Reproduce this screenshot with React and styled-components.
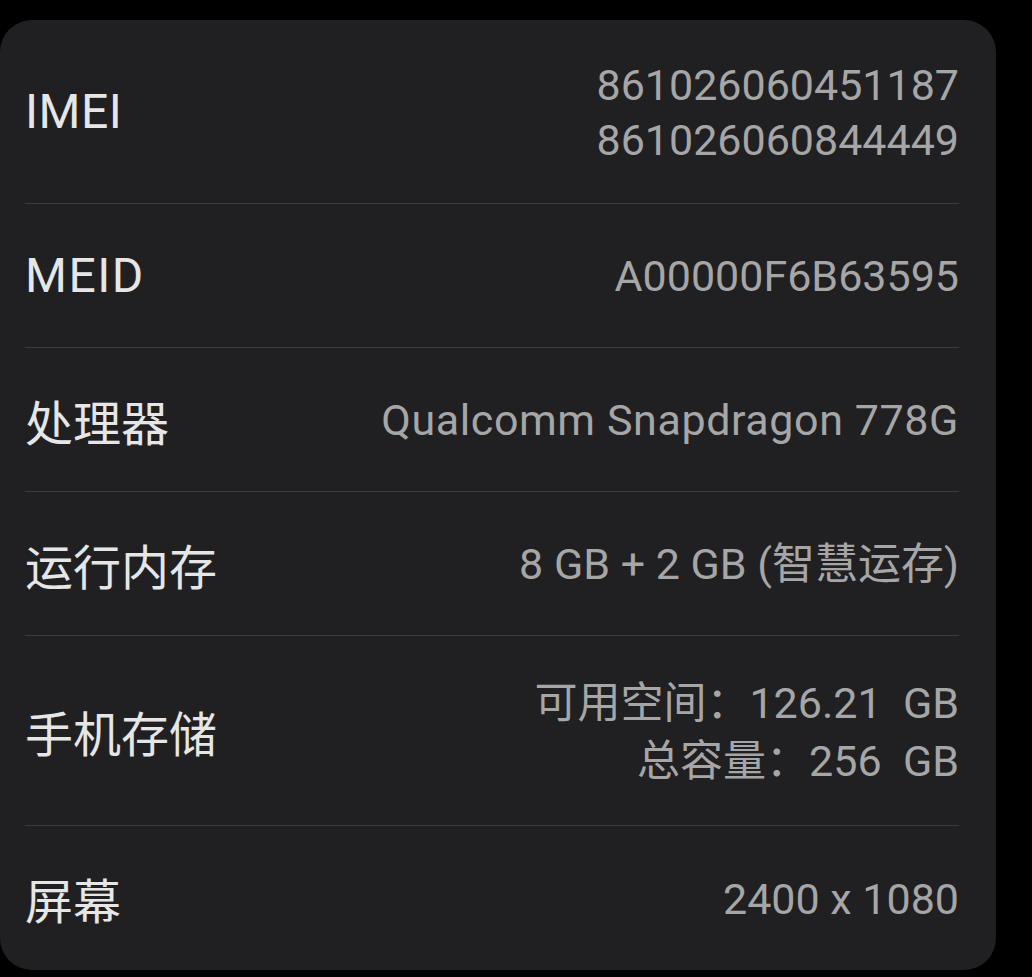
import React from "react";
import styled, { createGlobalStyle } from "styled-components";

const Global = createGlobalStyle`
  html, body {
    margin: 0;
    padding: 0;
    background: #000;
  }
  body {
    font-family: "Roboto", "Noto Sans CJK SC", sans-serif;
  }
`;

const Page = styled.div`
  width: 1032px;
  height: 977px;
  background: #000;
  padding-top: 20px;
  box-sizing: border-box;
`;

const Card = styled.div`
  width: 996px;
  height: 950px;
  box-sizing: border-box;
  background: #202022;
  border-radius: 32px;
  padding: 0 37px 0 25px;
  display: flex;
  flex-direction: column;
`;

const Row = styled.div`
  display: flex;
  align-items: center;
  justify-content: space-between;
  box-sizing: border-box;
  min-height: ${(p) => p.$h}px;
  border-bottom: ${(p) => (p.$last ? "none" : "1px solid #3a3a3c")};
`;

const Label = styled.div`
  font-size: 48px;
  color: #e6e6e6;
  white-space: nowrap;
  letter-spacing: ${(p) => p.$ls || 0}px;
`;

const Value = styled.div`
  font-size: 43px;
  line-height: ${(p) => p.$lh || 55}px;
  color: #a6a6a6;
  text-align: right;
  white-space: pre;
  letter-spacing: ${(p) => p.$ls || 0}px;
  padding-top: 2px;
`;

const rows = [
  { label: "IMEI", labelLs: 0.5, values: ["861026060451187", "861026060844449"], h: 184, lh: 55 },
  { label: "MEID", labelLs: 1.5, values: ["A00000F6B63595"], h: 144 },
  { label: "处理器", values: ["Qualcomm Snapdragon 778G"], h: 144, ls: 0.6 },
  { label: "运行内存", values: ["8 GB + 2 GB (智慧运存)"], h: 144 },
  { label: "手机存储", values: ["可用空间：126.21  GB", "总容量：256  GB"], h: 190, lh: 58 },
  { label: "屏幕", values: ["2400 x 1080"], h: 144 },
];

export default function App() {
  return (
    <>
      <Global />
      <Page>
        <Card>
          {rows.map((r, i) => (
            <Row key={r.label} $h={r.h} $last={i === rows.length - 1}>
              <Label $ls={r.labelLs}>{r.label}</Label>
              <Value $lh={r.lh} $ls={r.ls}>
                {r.values.map((v) => (
                  <div key={v}>{v}</div>
                ))}
              </Value>
            </Row>
          ))}
        </Card>
      </Page>
    </>
  );
}
